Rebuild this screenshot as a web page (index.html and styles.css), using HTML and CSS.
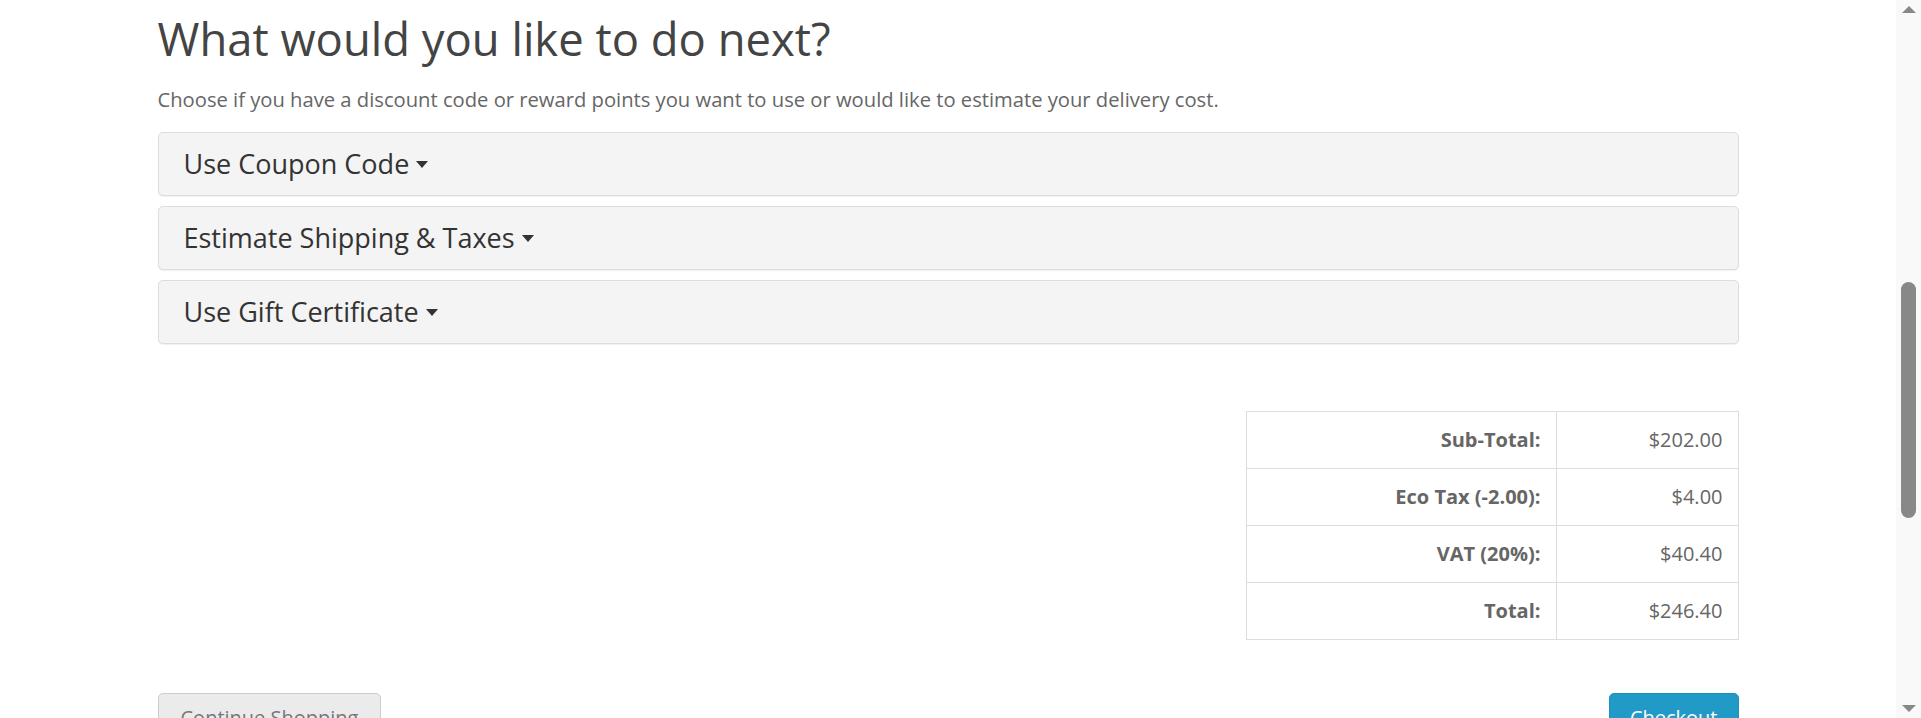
FILE: index.html
```html
<!DOCTYPE html>
<html lang="en">
<head>
<meta charset="utf-8">
<title>Shopping Cart</title>
<link rel="stylesheet" href="styles.css">
</head>
<body>
<div class="main">
  <div class="container">
    <h2 class="title">What would you like to do next?</h2>
    <p class="lead">Choose if you have a discount code or reward points you want to use or would like to estimate your delivery cost.</p>
    <div class="panel-group">
      <div class="panel"><div class="panel-heading">Use Coupon Code <span class="caret"></span></div></div>
      <div class="panel"><div class="panel-heading">Estimate Shipping &amp; Taxes <span class="caret"></span></div></div>
      <div class="panel"><div class="panel-heading">Use Gift Certificate <span class="caret"></span></div></div>
    </div>
    <div class="totals-row">
      <table class="totals">
        <tr><td class="label">Sub-Total:</td><td class="value">$202.00</td></tr>
        <tr><td class="label">Eco Tax (-2.00):</td><td class="value">$4.00</td></tr>
        <tr><td class="label">VAT (20%):</td><td class="value">$40.40</td></tr>
        <tr><td class="label">Total:</td><td class="value">$246.40</td></tr>
      </table>
    </div>
    <div class="buttons">
      <a class="btn btn-default" href="#">Continue Shopping</a>
      <a class="btn btn-primary" href="#">Checkout</a>
    </div>
  </div>
</div>
<div class="scrollbar">
  <span class="arrow up"></span>
  <span class="thumb"></span>
  <span class="arrow down"></span>
</div>
</body>
</html>
```
FILE: styles.css
```css
html, body {
  margin: 0;
  padding: 0;
  height: 100%;
  overflow: hidden;
  background: #fff;
}
body {
  font-family: "Open Sans", "Liberation Sans", sans-serif;
  color: #666;
}
.main {
  margin-right: 25px;
  padding-top: 13px;
}
.container {
  width: 1581px;
  margin: 0 auto;
}
.title {
  margin: 0;
  font-size: 45.4px;
  font-weight: 400;
  line-height: 50px;
  color: #444;
}
.lead {
  margin: 22.5px 0 0;
  font-size: 20.2px;
  line-height: 27px;
  color: #666;
}
.panel-group {
  margin-top: 19px;
  display: flex;
  flex-direction: column;
  gap: 10px;
}
.panel {
  background: #f4f4f4;
  border: 1px solid #ddd;
  border-radius: 5px;
  box-shadow: 0 1px 1px rgba(0, 0, 0, 0.06);
}
.panel-heading {
  padding: 16px 25px;
  font-size: 27px;
  line-height: 30px;
  color: #333;
}
.caret {
  display: inline-block;
  width: 0;
  height: 0;
  vertical-align: middle;
  border-top: 7px solid #333;
  border-left: 6.5px solid transparent;
  border-right: 6.5px solid transparent;
  position: relative;
  top: -2px;
}
.totals-row {
  display: flex;
  justify-content: flex-end;
  margin-top: 67px;
}
.totals {
  width: 493px;
  border-collapse: collapse;
  font-size: 20px;
  color: #666;
}
.totals td {
  border: 1px solid #ddd;
  padding: 13px 15px;
  line-height: 30px;
  text-align: right;
}
.totals .label {
  width: 279px;
  font-weight: 700;
}
.buttons {
  display: flex;
  justify-content: space-between;
  margin-top: 53.5px;
}
.btn {
  display: inline-block;
  padding: 10px 22px;
  font-size: 20px;
  line-height: 28px;
  border-radius: 5px;
  text-decoration: none;
  border: 1px solid;
}
.btn-default {
  background: #ebebeb;
  border-color: #ccc;
  color: #777;
}
.btn-primary {
  padding: 10px 20px;
  background: #229ac8;
  border-color: #1f90bb;
  color: #fff;
}
.scrollbar {
  position: fixed;
  top: 0;
  right: 0;
  bottom: 0;
  width: 25px;
  background: #f9f9f9;
}
.thumb {
  position: absolute;
  left: 5px;
  width: 15px;
  top: 282px;
  height: 236px;
  border-radius: 8px;
  background: #888;
}
.arrow {
  position: absolute;
  left: 6px;
  width: 0;
  height: 0;
  border-left: 7px solid transparent;
  border-right: 7px solid transparent;
}
.arrow.up {
  top: 6px;
  border-bottom: 7px solid #888;
}
.arrow.down {
  bottom: 6px;
  border-top: 7px solid #888;
}
```
